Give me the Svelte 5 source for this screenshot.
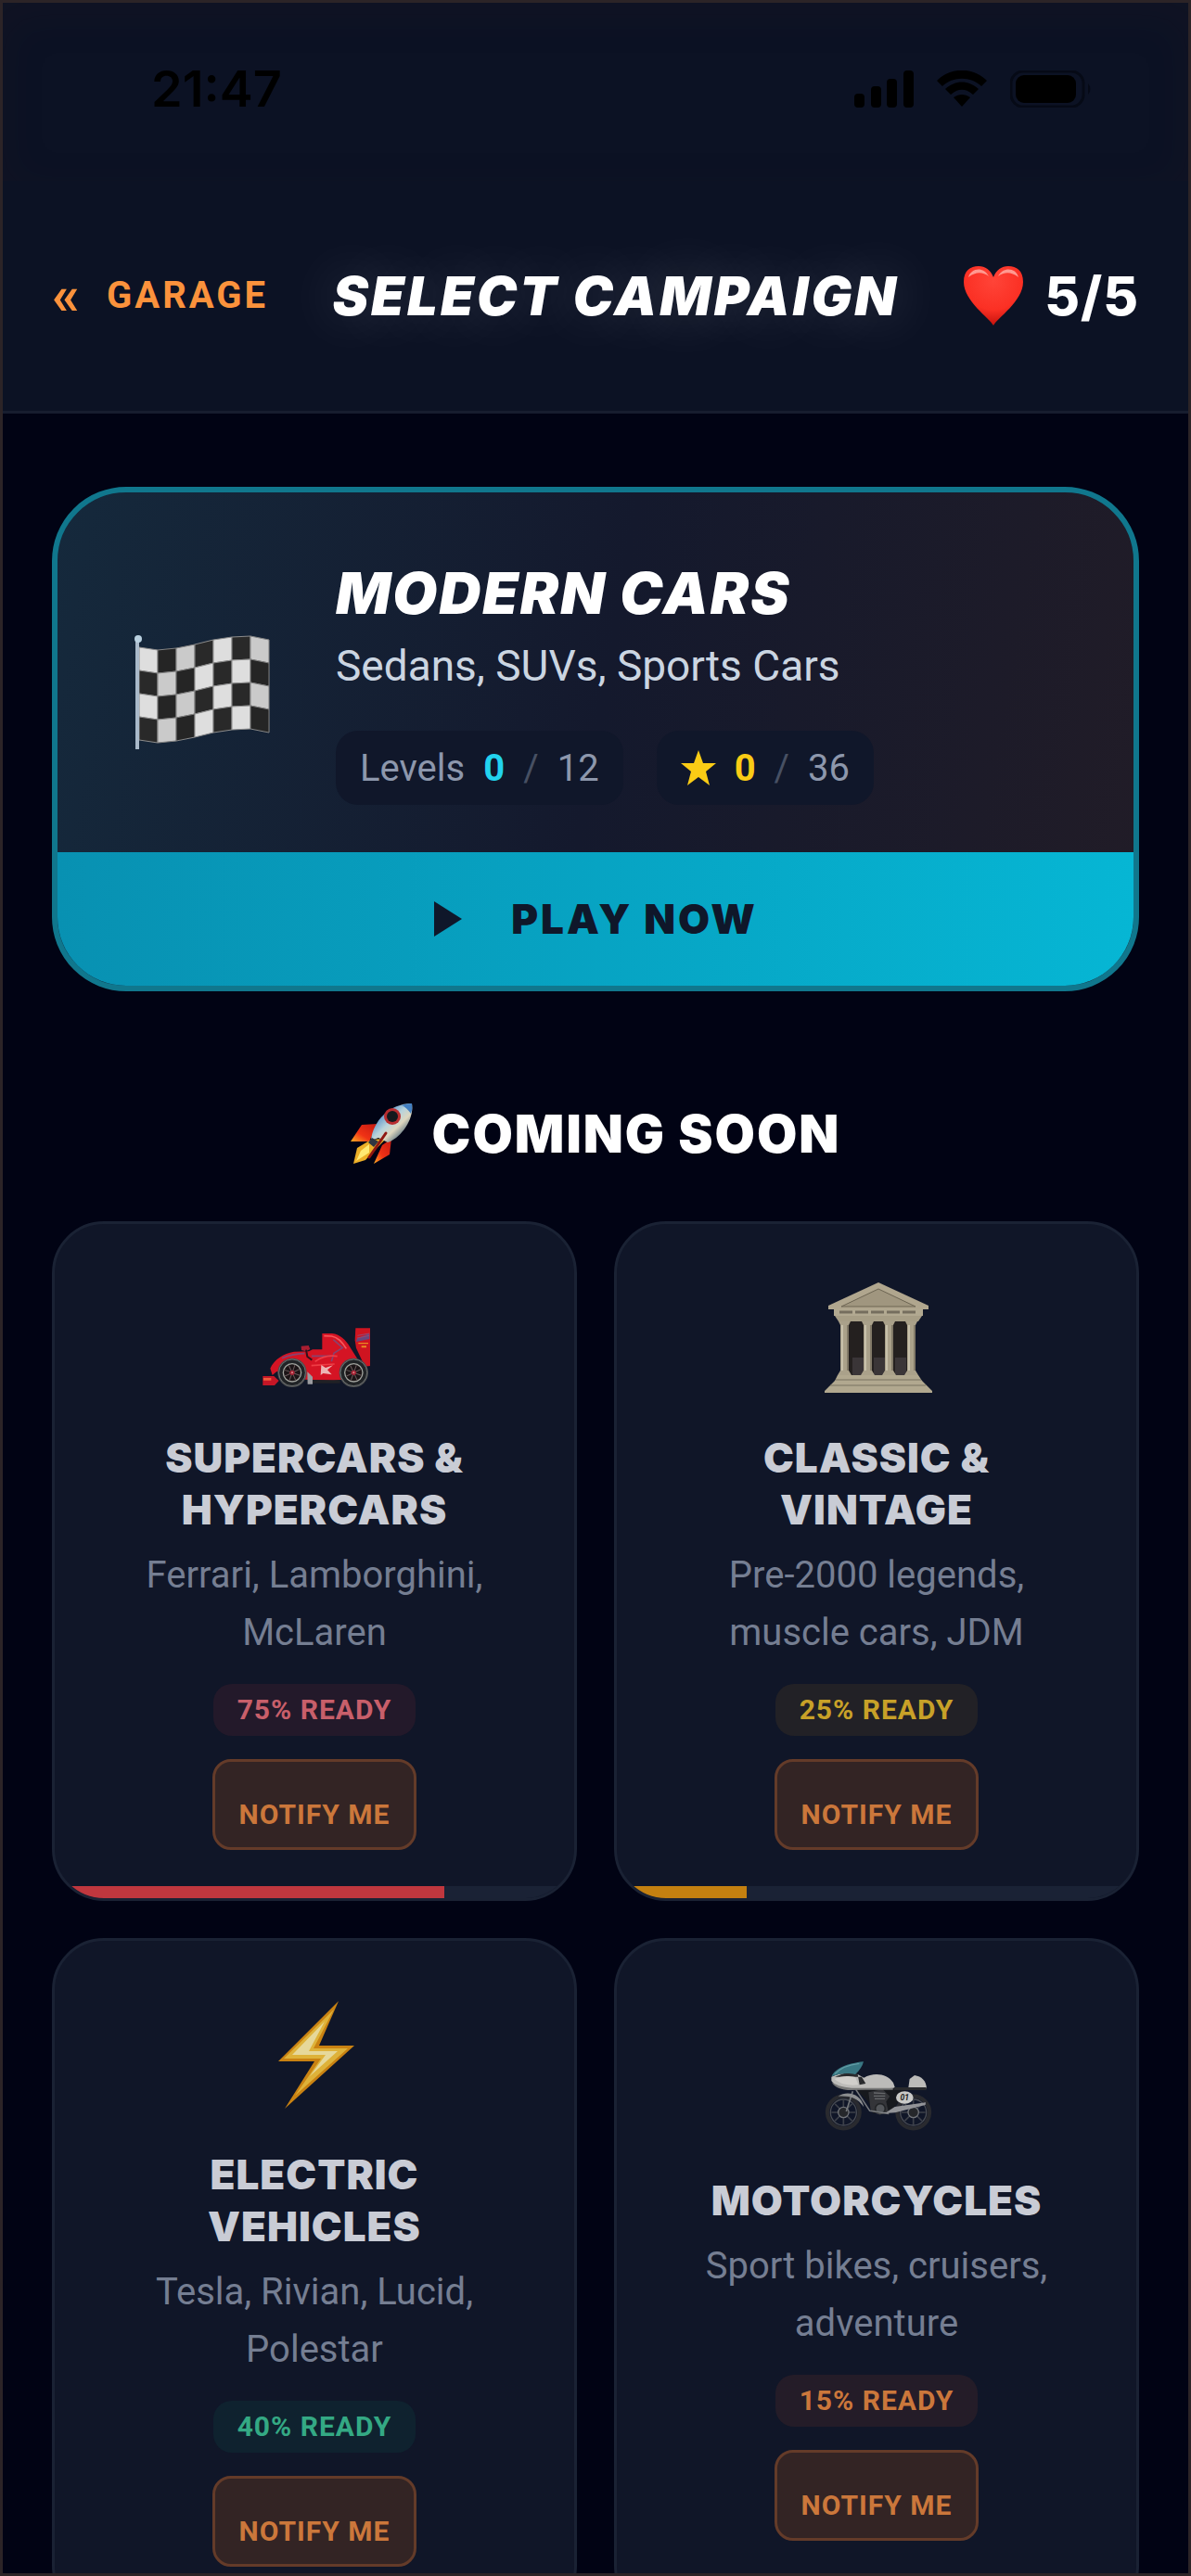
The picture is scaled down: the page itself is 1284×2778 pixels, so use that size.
<script>
  const featured = {
    title: "Modern Cars",
    description: "Sedans, SUVs, Sports Cars",
    levels: 0,
    totalLevels: 12,
    stars: 0,
    totalStars: 36
  };

  const upcoming = [
    { id: "supercars", title: "Supercars & Hypercars", description: "Ferrari, Lamborghini, McLaren", ready: 75, tone: "red" },
    { id: "classic", title: "Classic & Vintage", description: "Pre-2000 legends, muscle cars, JDM", ready: 25, tone: "amber" },
    { id: "electric", title: "Electric Vehicles", description: "Tesla, Rivian, Lucid, Polestar", ready: 40, tone: "green" },
    { id: "motorcycles", title: "Motorcycles", description: "Sport bikes, cruisers, adventure", ready: 15, tone: "orange" }
  ];

  // top edge of the flag cloth, one point per column seam
  const wave = [36, 39, 37, 33, 28, 25, 24, 28];
  const flagCells = [];
  for (let row = 0; row < 4; row++) {
    for (let col = 0; col < 7; col++) {
      const x1 = 4 + col * 20;
      const x2 = x1 + 20;
      const yl = wave[col] + row * 25;
      const yr = wave[col + 1] + row * 25;
      flagCells.push({
        d: `M${x1} ${yl}L${x2} ${yr}V${yr + 25}L${x1} ${yl + 25}Z`,
        dark: (row + col) % 2 === 1
      });
    }
  }
  const spokes = [0, 45, 90, 135, 180, 225, 270, 315];
</script>

{#snippet raceWheel(cx)}
  <circle {cx} cy="181" r="47" fill="#4c4f50" />
  <circle {cx} cy="181" r="43" fill="#202326" stroke="#8a8d8c" stroke-width="2" />
  <circle {cx} cy="181" r="29" fill="#1b1416" stroke="#a1a39e" stroke-width="4" />
  {#each spokes as angle}
    <path d="M{cx} 175v-20" stroke="#69595b" stroke-width="3" transform="rotate({angle + 20} {cx} 181)" />
  {/each}
  <circle {cx} cy="181" r="8" fill="#a32033" />
  <circle {cx} cy="181" r="3" fill="#dc8d8d" />
{/snippet}

{#snippet bikeWheel(cx, cy)}
  <circle {cx} {cy} r="52" fill="none" stroke="#292a2f" stroke-width="13" />
  <circle {cx} {cy} r="42" fill="none" stroke="#4a4d54" stroke-width="4" />
  {#each spokes as angle}
    <path d="M{cx} {cy}v-39" stroke="#3c4049" stroke-width="5" transform="rotate({angle} {cx} {cy})" />
  {/each}
  <circle {cx} {cy} r="17" fill="#25272b" stroke="#6f7278" stroke-width="4" />
{/snippet}

{#snippet campaignIcon(id)}
  {#if id === "supercars"}
    <svg class="card-icon" viewBox="27 -114 360 360" aria-hidden="true">
      <path d="M340 37h48v122l-18 2-28-60-4-25Z" fill="#cf1420" />
      <path d="m345 70 40-16v18l-43 9Z" fill="#67477d" />
      <path d="m346 61 38-7M345 69l39-8" stroke="#9b4770" stroke-width="3" />
      <path d="M349 84h32v4h-32zM359 94h16v6h-16z" fill="#e88923" />
      <path d="M64 167c13-29 42-48 77-54l48-1 12-6h31V54h32c25 3 44 20 58 44l35 56-12 45-76 7-93-3-91-26-14 12Z" fill="#d51424" />
      <path d="m238 62 25 1c21 4 33 18 47 40" fill="none" stroke="#f5595c" stroke-width="5" />
      <path d="m268 74 30 26-28 18-8 27M102 134c21-9 47-14 73-15M198 127h62" fill="none" stroke="#88436f" stroke-width="5" />
      <path d="m164 95 24-2 5 12-14 7-14-4Z" fill="#a91e31" />
      <path d="m180 107 4 22 15 11" fill="none" stroke="#31111b" stroke-width="6" />
      <path d="M209 145c20-14 48-21 72-17M197 158l75-5" fill="none" stroke="#ef3d45" stroke-width="5" />
      <path d="m229 156 14 9 24-8-18 15 14 15-28-4-8 6Z" fill="#ecb5b4" />
      <path d="M195 205h95v10h-95z" fill="#202125" />
      <path d="m184 178 17 16v24h-16z" fill="#9b9ca0" />
      <path d="M40 192h36l16 15-14 15H40z" fill="#c51626" />
      <path d="M42 198h25v8H42z" fill="#f05c3d" />
      {@render raceWheel(135)}
      {@render raceWheel(334)}
    </svg>
  {:else if id === "classic"}
    <svg class="card-icon" viewBox="0 0 120 120" aria-hidden="true">
      <path d="M22 41h80v62H22z" fill="#24201f" />
      <path d="M34 82h12v19H34zM57 82h12v19H57zM80 82h12v19H80z" fill="#3a3537" />
      <path d="m62 1 54 25v4H8v-4Z" fill="#b0a68e" />
      <path d="m62 8 40 19H22Z" fill="#a0967f" stroke="#6d6553" />
      <path d="M14 30h96v7H14z" fill="#b2a991" />
      <path d="M20 33h84" stroke="#756e5e" stroke-width="3" stroke-dasharray="14 3" />
      <path d="M15 37h94l-4 6H19z" fill="#a79e86" />
      {#each [20, 45, 68, 92] as x}
        <path d="M{x - 1} 43h13l-2 4v49l3 5H{x - 2}l3-5V47z" fill="#aaa18a" />
        <path d="M{x + 3} 47v49" stroke="#c7c0aa" stroke-width="2" />
        <path d="M{x + 9} 47v49" stroke="#827a68" stroke-width="2" />
      {/each}
      <path d="M18 101h87l4 6 6 6 5 5v2H4v-2l5-5 6-6z" fill="#b1a88f" />
      <path d="M16 106h92M10 112h103" stroke="#797260" />
    </svg>
  {:else if id === "electric"}
    <svg class="card-icon" viewBox="0 0 120 120" aria-hidden="true">
      <path d="M86 3 21 68h39L28 119l75-68H65Z" fill="#c98212" />
      <path d="M81 12 27 65h40L39 105l57-51H59Z" fill="#deb239" />
      <path d="M71 25 36 61h36L55 84l30-27H54Z" fill="#e6d89a" />
    </svg>
  {:else}
    <svg class="card-icon" viewBox="15 -57 360 360" aria-hidden="true">
      {@render bikeWheel(88, 228)}
      {@render bikeWheel(314, 228)}
      <path d="m125 150 43 43 15 37 54 3 54-75-88-14Z" fill="#17191d" />
      <path d="m169 163 45-10 24 23-12 17 7 31-27 12-30-14Z" fill="#343539" />
      <circle cx="207" cy="216" r="16" fill="#53565a" stroke="#222427" stroke-width="5" />
      <path d="m186 165 37 2m-37 8h37m-34 9h33" stroke="#66686b" stroke-width="4" />
      <path d="m118 160-21 65M128 154l45 69 62 9" fill="none" stroke="#74777b" stroke-width="5" />
      <path d="M71 176c31-20 74-7 83 35-22-31-46-37-83-35Z" fill="#8c8e90" />
      <path d="m192 233 63-4 98-25 1-8-100 14-28 18Z" fill="#929397" />
      <path d="M49 113c27-13 54-13 85-8l20 11c32-19 76-14 95 16l6 17-151 6c-33-5-48-19-55-29Z" fill="#bcbbb9" />
      <path d="M51 131c18 11 49 20 85 18h112v6H100c-27-2-44-12-49-24Z" fill="#787878" />
      <path d="m60 113 40-15 34 6 6 35 20-4-13-22" fill="#292a2d" />
      <path d="M50 112c9-25 50-43 103-48-4 15-12 28-27 41-29-5-46-3-76 7Z" fill="#397783" />
      <path d="M60 104c18-20 43-30 79-34" fill="none" stroke="#619ca5" stroke-width="4" />
      <path d="M59 120c21-9 38-11 67-6l10 25c-30 3-56-1-77-19Z" fill="#d0cecb" />
      <path d="m298 148 4-28 16-12c23 4 37 17 39 43Z" fill="#bcbbb9" />
      <path d="M251 147h105v9H251z" fill="#28292d" />
      <ellipse cx="286" cy="180" rx="28" ry="20" fill="#c9c9c7" />
      <text x="286" y="189" class="race-number">01</text>
    </svg>
  {/if}
{/snippet}

<div class="screen">
  <header class="top">
    <div class="status">
      <time>21:47</time>
      <div class="status-icons">
        <svg width="64" height="40" viewBox="0 0 64 40" aria-hidden="true">
          <rect y="25" width="11" height="15" rx="4" />
          <rect x="18" y="17" width="11" height="23" rx="4" />
          <rect x="35" y="9" width="11" height="31" rx="4" />
          <rect x="53" width="11" height="40" rx="4" />
        </svg>
        <svg width="54" height="40" viewBox="0 0 54 40" aria-hidden="true">
          <path d="M0 11C15-4 39-4 54 11l-6 6C37 6 17 6 6 17Z" />
          <path d="M9 20c11-10 25-10 36 0l-6 6c-8-7-16-7-24 0Z" />
          <path d="M18 29c6-4 12-4 18 0l-9 10Z" />
        </svg>
        <svg width="90" height="40" viewBox="0 0 90 40" aria-hidden="true">
          <rect x="1" y="1" width="78" height="38" rx="13" class="battery-shell" />
          <rect x="6" y="5" width="65" height="30" rx="9" />
          <path d="M84 14q5 6 0 12Z" class="battery-tip" />
        </svg>
      </div>
    </div>

    <div class="nav">
      <a class="back" href="#garage"><span class="chevron">«</span><span>Garage</span></a>
      <h1>Select Campaign</h1>
      <div class="lives" aria-label="Lives">
        <svg width="66" height="66" viewBox="0 0 66 66" aria-hidden="true">
          <defs>
            <radialGradient id="heart" cx="0.5" cy="0.25" r="0.75">
              <stop offset="0" stop-color="#ff4438" />
              <stop offset="0.65" stop-color="#fb3024" />
              <stop offset="1" stop-color="#c5120d" />
            </radialGradient>
          </defs>
          <path d="M33 65C29 57 1 39 1 18 1 6 8 1 17 1c7 0 13 4 16 12C36 5 42 1 49 1c9 0 16 5 16 17 0 21-28 39-32 47Z" fill="url(#heart)" />
          <path d="M6 13C9 3 22 1 28 12 21 7 14 7 6 13ZM38 12C43 2 57 2 60 13 52 7 45 7 38 12Z" fill="#ff9a91" />
        </svg>
        <span>5/5</span>
      </div>
    </div>
  </header>

  <main>
    <article class="featured">
      <div class="featured-body">
        <svg class="flag" viewBox="0 0 144 144" aria-hidden="true">
          {#each flagCells as cell}
            <path d={cell.d} fill={cell.dark ? "#292929" : "#dedede"} stroke="#8c8c8c" />
          {/each}
          <path d="M24 39q20-2 40-7v100q-20 7-40 7ZM124 24l20 4v100l-20-4Z" fill="#000" opacity="0.09" />
          <path d="M2 28v118" stroke="#a9b9c9" stroke-width="4" />
          <circle cx="3" cy="27" r="4" fill="#b9d0df" />
        </svg>
        <div class="featured-info">
          <h2>{featured.title}</h2>
          <p>{featured.description}</p>
          <div class="stats">
            <div class="stat">
              <span>Levels</span>
              <strong class="levels">{featured.levels}</strong>
              <span class="slash">/</span>
              <span>{featured.totalLevels}</span>
            </div>
            <div class="stat">
              <svg width="38" height="38" viewBox="0 0 38 38" aria-hidden="true">
                <path d="m19 0 5 14h14L27 23l4 15-12-9-12 9 4-15L0 14h14Z" fill="#facc15" />
              </svg>
              <strong class="stars">{featured.stars}</strong>
              <span class="slash">/</span>
              <span>{featured.totalStars}</span>
            </div>
          </div>
        </div>
      </div>
      <button class="play" type="button">
        <svg width="32" height="38" viewBox="0 0 32 38" aria-hidden="true">
          <path d="M1 0 31 19 1 38Z" fill="#0f172a" />
        </svg>
        <span>Play Now</span>
      </button>
    </article>

    <section>
      <h2 class="section-title">
        <svg width="68" height="68" viewBox="0 0 68 68" aria-hidden="true">
          <defs>
            <linearGradient id="rocket-body" x1="0.2" y1="0.2" x2="0.8" y2="0.8">
              <stop offset="0" stop-color="#427fc2" />
              <stop offset="0.45" stop-color="#b8d3dc" />
              <stop offset="0.7" stop-color="#ded7bf" />
              <stop offset="1" stop-color="#597180" />
            </linearGradient>
            <linearGradient id="rocket-fin" x1="1" y1="0" x2="0" y2="1">
              <stop offset="0" stop-color="#c51912" />
              <stop offset="0.6" stop-color="#f03215" />
              <stop offset="1" stop-color="#ffaf24" />
            </linearGradient>
          </defs>
          <path d="M0 42 12 24l17-1-9 19Z" fill="url(#rocket-fin)" />
          <path d="m25 66 9-20 10-7-2 17Z" fill="url(#rocket-fin)" />
          <path d="M22 40 7 49 3 66l13-4 22-23Z" fill="#edaf27" />
          <path d="m20 45-9 7-5 11 14-9Z" fill="#ffe973" />
          <path d="M22 41C24 20 42 1 66 1c3 18-13 38-26 42l-10-5Z" fill="url(#rocket-body)" />
          <path d="M55 3q6-2 11-2 1 6-1 11Q60 5 55 3Z" fill="#427fc2" />
          <path d="m19 43 4-5 7 4-5 6Z" fill="#303641" />
          <circle cx="45" cy="15" r="9" fill="#b82d2f" />
          <circle cx="45" cy="15" r="6" fill="#15191d" />
          <path d="M38 33 20 59" stroke="#8f1711" stroke-width="3" stroke-linecap="round" />
        </svg>
        <span>Coming Soon</span>
      </h2>

      <div class="grid">
        {#each upcoming as item (item.id)}
          <article class="card {item.tone}">
            {@render campaignIcon(item.id)}
            <h3>{item.title}</h3>
            <p>{item.description}</p>
            <span class="badge">{item.ready}% Ready</span>
            <button class="notify" type="button">Notify Me</button>
            <div class="progress"><div class="fill" style="width: {item.ready}%"></div></div>
          </article>
        {/each}
      </div>
    </section>
  </main>
</div>

<style>
  :global(body) {
    margin: 0;
    background: #010314;
  }

  .screen {
    box-sizing: border-box;
    display: flex;
    flex-direction: column;
    height: 100vh;
    overflow: hidden;
    border: 3px solid #2c2427;
    background: #010314;
    color: #fff;
    font-family: Roboto, "Liberation Sans", sans-serif;
  }

  h1,
  h2,
  h3,
  p {
    margin: 0;
  }

  h1,
  h2,
  h3,
  .lives,
  .play {
    font-family: Inter, Roboto, sans-serif;
  }

  svg {
    display: block;
    flex: none;
  }

  .top {
    flex: none;
    border-bottom: 3px solid #171d2f;
    background: #0c1224;
  }

  .status {
    display: flex;
    justify-content: space-between;
    align-items: center;
    box-sizing: border-box;
    height: 192px;
    padding: 0 102px 6px 160px;
    color: #000;
    box-shadow: inset 0 12px 48px rgba(60, 35, 30, 0.12);
  }

  .status time {
    font: 600 54px/64px Inter, sans-serif;
  }

  .status-icons {
    display: flex;
    gap: 25px;
  }

  .battery-shell {
    fill: none;
    stroke: #060a16;
    stroke-width: 3;
  }

  .battery-tip {
    fill: #060a16;
  }

  .nav {
    display: flex;
    justify-content: space-between;
    align-items: center;
    height: 248px;
    padding: 0 53px;
    text-transform: uppercase;
  }

  .back {
    display: flex;
    align-items: center;
    gap: 26px;
    color: #fb923c;
    font-size: 40px;
    font-weight: 700;
    letter-spacing: 3px;
    line-height: 48px;
    text-decoration: none;
  }

  .chevron {
    font-size: 60px;
  }

  h1 {
    font-size: 58px;
    font-style: italic;
    font-weight: 900;
    letter-spacing: 3px;
    line-height: 64px;
    text-shadow: 0 0 60px rgba(255, 255, 255, 0.2);
    white-space: nowrap;
  }

  .lives {
    display: flex;
    align-items: center;
    gap: 22px;
    font-size: 58px;
    font-weight: 800;
    letter-spacing: 1px;
    line-height: 64px;
  }

  main {
    flex: 1;
    min-height: 0;
    overflow-y: auto;
    scrollbar-width: none;
    padding: 79px 53px;
  }

  .featured {
    overflow: hidden;
    border: 6px solid #10778d;
    border-radius: 80px;
    background: linear-gradient(100deg, #15293c, #14192d 50%, #211c27);
  }

  .featured-body {
    display: flex;
    align-items: center;
    gap: 72px;
    padding: 69px 84px 51px;
  }

  .flag {
    width: 144px;
    height: 144px;
    overflow: visible;
  }

  .featured h2 {
    font-size: 62px;
    font-style: italic;
    font-weight: 900;
    letter-spacing: 2px;
    line-height: 80px;
    text-transform: uppercase;
  }

  .featured p {
    margin-top: 8px;
    color: #cbd5e1;
    font-size: 46px;
    line-height: 60px;
  }

  .stats {
    display: flex;
    gap: 36px;
    margin-top: 40px;
  }

  .stat {
    display: flex;
    align-items: center;
    gap: 20px;
    height: 80px;
    padding: 0 26px;
    border-radius: 24px;
    background: #10172a;
    color: #8d97ac;
    font-size: 40px;
  }

  .slash {
    color: #475063;
  }

  .levels {
    color: #22d3ee;
  }

  .stars {
    color: #facc15;
  }

  .play {
    display: flex;
    justify-content: center;
    align-items: center;
    gap: 52px;
    width: 100%;
    height: 144px;
    padding: 0;
    border: 0;
    background: linear-gradient(90deg, #0891b2, #06b6d4);
    color: #0f172a;
    font-size: 44px;
    font-weight: 900;
    letter-spacing: 3px;
    text-transform: uppercase;
    cursor: pointer;
  }

  .section-title {
    display: flex;
    justify-content: center;
    align-items: center;
    gap: 20px;
    margin: 120px 0 60px;
    font-size: 56px;
    font-weight: 900;
    letter-spacing: 2px;
    line-height: 64px;
    text-transform: uppercase;
  }

  .grid {
    display: grid;
    grid-template-columns: 1fr 1fr;
    grid-auto-rows: 1fr;
    gap: 40px;
  }

  .card {
    position: relative;
    display: flex;
    flex-direction: column;
    align-items: center;
    justify-content: center;
    overflow: hidden;
    padding: 62px 72px 52px;
    border: 3px solid #1a2234;
    border-radius: 56px;
    background: #101628;
    text-align: center;
  }

  .card-icon {
    width: 120px;
    height: 120px;
  }

  .race-number {
    fill: #222;
    font-size: 26px;
    font-style: italic;
    font-weight: 700;
    text-anchor: middle;
  }

  .card h3 {
    margin-top: 42px;
    color: #c9ccd5;
    font-size: 44px;
    font-weight: 900;
    letter-spacing: 1px;
    line-height: 56px;
    text-transform: uppercase;
  }

  .card p {
    margin-top: 12px;
    color: #757e92;
    font-size: 40px;
    line-height: 62px;
  }

  .badge {
    margin-top: 24px;
    padding: 0 26px;
    border-radius: 20px;
    font-size: 30px;
    font-weight: 700;
    letter-spacing: 1px;
    line-height: 56px;
    text-transform: uppercase;
  }

  .notify {
    height: 98px;
    margin-top: 25px;
    padding: 20px 26px 0;
    border: 3px solid #643b29;
    border-radius: 20px;
    background: #332424;
    color: #cb773b;
    font: inherit;
    font-size: 30px;
    font-weight: 700;
    letter-spacing: 1px;
    text-transform: uppercase;
    cursor: pointer;
  }

  .progress {
    position: absolute;
    right: 0;
    bottom: 0;
    left: 0;
    height: 13px;
    background: #1a2235;
  }

  .fill {
    height: 100%;
  }

  .red .badge {
    background: #23192a;
    color: #c85f6a;
  }

  .red .fill {
    background: #c0373e;
  }

  .amber .badge {
    background: #222126;
    color: #c8a128;
  }

  .amber .fill {
    background: #c48010;
  }

  .green .badge {
    background: #0f222f;
    color: #34a984;
  }

  .green .fill {
    background: #0f966e;
  }

  .orange .badge {
    background: #241c28;
    color: #cb773b;
  }

  .orange .fill {
    background: #c65f18;
  }
</style>
